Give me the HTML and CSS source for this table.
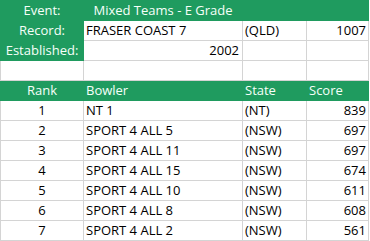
FILE: index.html
```html
<!DOCTYPE html>
<html>
<head>
<meta charset="utf-8">
<link rel="stylesheet" href="styles.css">
</head>
<body>
<div class="sheet">
  <div class="cell first top green center">Event:</div>
  <div class="cell top green center">Mixed Teams - E Grade</div>
  <div class="cell top green"></div>
  <div class="cell top green"></div>

  <div class="cell first green center">Record:</div>
  <div class="cell">FRASER COAST 7</div>
  <div class="cell">(QLD)</div>
  <div class="cell right">1007</div>

  <div class="cell first green center">Established:</div>
  <div class="cell right pad3">2002</div>
  <div class="cell"></div>
  <div class="cell"></div>

  <div class="cell first"></div>
  <div class="cell"></div>
  <div class="cell"></div>
  <div class="cell"></div>

  <div class="cell first green center">Rank</div>
  <div class="cell green">Bowler</div>
  <div class="cell green">State</div>
  <div class="cell green">Score</div>

  <div class="cell first center">1</div>
  <div class="cell">NT 1</div>
  <div class="cell">(NT)</div>
  <div class="cell right">839</div>

  <div class="cell first center">2</div>
  <div class="cell">SPORT 4 ALL 5</div>
  <div class="cell">(NSW)</div>
  <div class="cell right">697</div>

  <div class="cell first center">3</div>
  <div class="cell">SPORT 4 ALL 11</div>
  <div class="cell">(NSW)</div>
  <div class="cell right">697</div>

  <div class="cell first center">4</div>
  <div class="cell">SPORT 4 ALL 15</div>
  <div class="cell">(NSW)</div>
  <div class="cell right">674</div>

  <div class="cell first center">5</div>
  <div class="cell">SPORT 4 ALL 10</div>
  <div class="cell">(NSW)</div>
  <div class="cell right">611</div>

  <div class="cell first center">6</div>
  <div class="cell">SPORT 4 ALL 8</div>
  <div class="cell">(NSW)</div>
  <div class="cell right">608</div>

  <div class="cell first center">7</div>
  <div class="cell">SPORT 4 ALL 2</div>
  <div class="cell">(NSW)</div>
  <div class="cell right">561</div>
</div>
</body>
</html>
```

FILE: styles.css
```css
html, body {
  margin: 0;
  padding: 0;
  background: #ffffff;
}

.sheet {
  display: grid;
  grid-template-columns: 84px 159px 64px 62px;
  grid-template-rows: 21px;
  grid-auto-rows: 20px;
  font-family: "Open Sans", "Liberation Sans", sans-serif;
  font-size: 13px;
  line-height: 19px;
  color: #000000;
}

.cell {
  box-sizing: border-box;
  border-right: 1px solid #d4d4d4;
  border-bottom: 1px solid #d4d4d4;
  padding: 0 2px;
  white-space: nowrap;
  overflow: hidden;
}

.first {
  border-left: 1px solid #d4d4d4;
}

.top {
  border-top: 1px solid #d4d4d4;
}

.green {
  background: #1f9b5f;
  border-color: #1f9b5f;
  color: #f6fff9;
}

.center {
  text-align: center;
}

.right {
  text-align: right;
}

.pad3 {
  padding-right: 3px;
}
```
